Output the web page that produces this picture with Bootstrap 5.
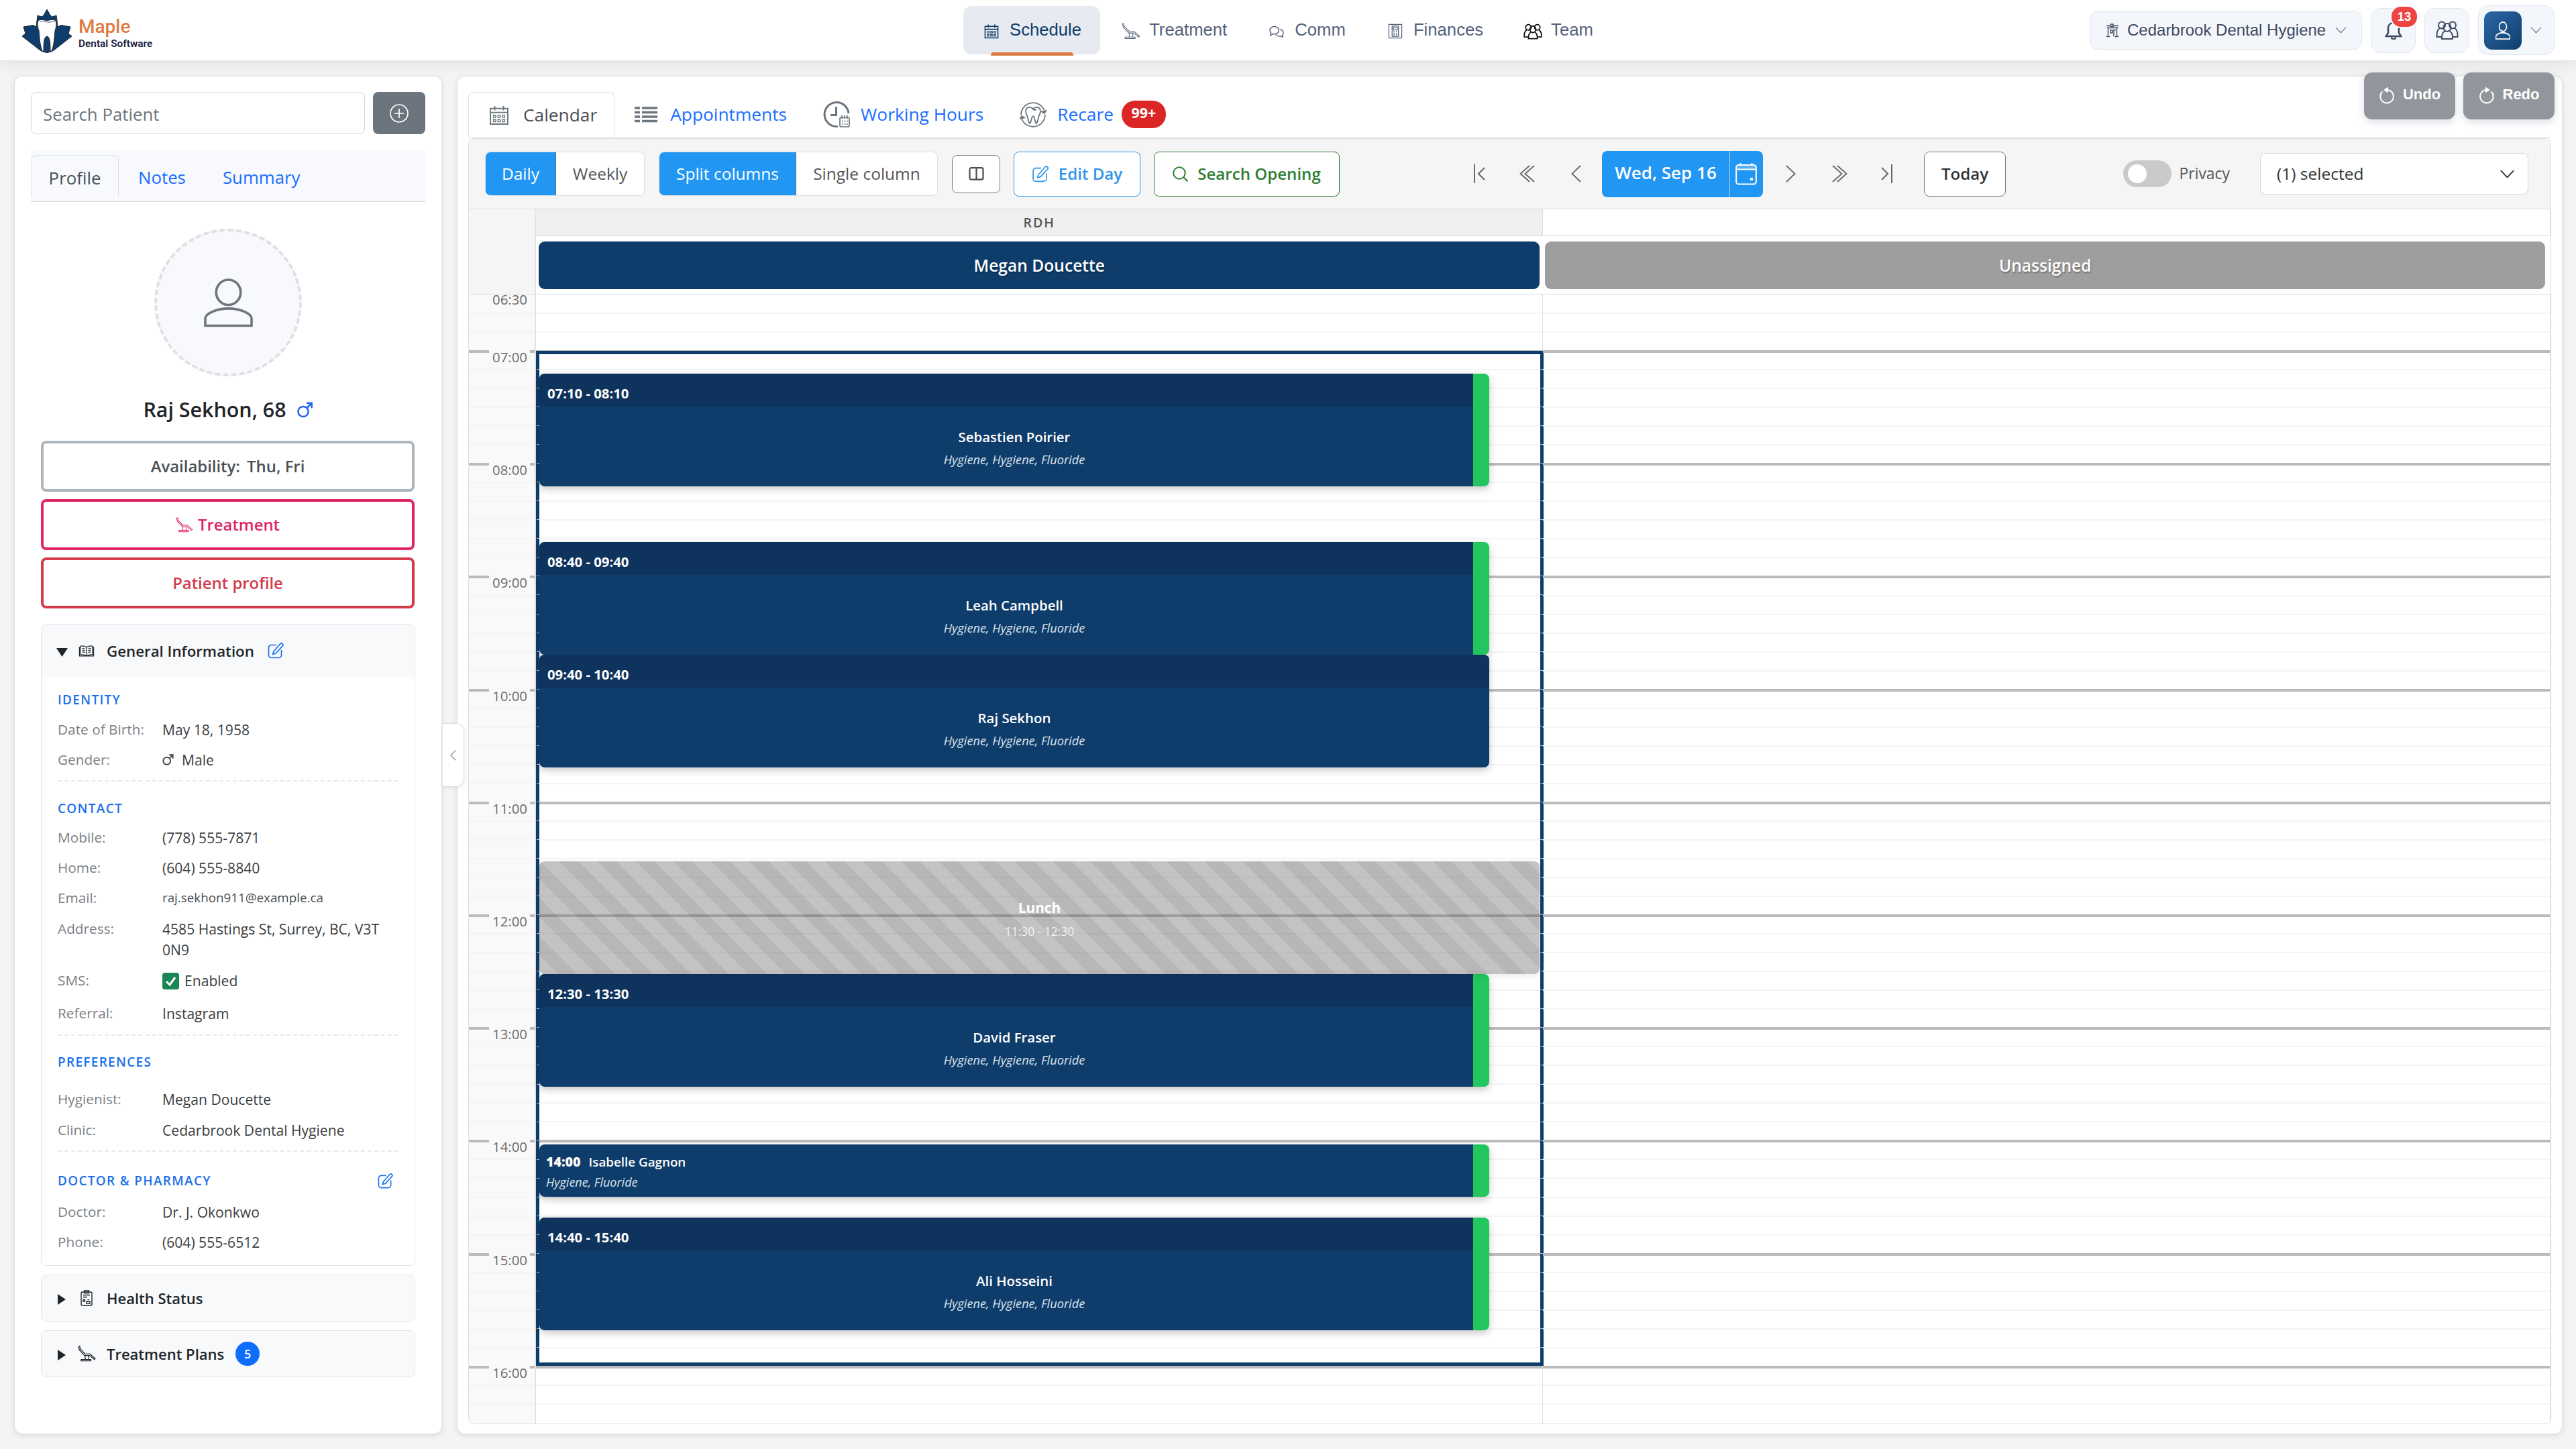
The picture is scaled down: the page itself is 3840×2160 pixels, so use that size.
<!DOCTYPE html>
<html lang="en">
<head>
    <meta charset="UTF-8">
    <meta name="viewport" content="width=device-width, initial-scale=1.0">
    <title>Maple Dental Software - Schedule</title>
    <link href="https://cdn.jsdelivr.net/npm/bootstrap@5.3.0/dist/css/bootstrap.min.css" rel="stylesheet">
    <style>
        body {
            font-family: "Open Sans", "Noto Sans", sans-serif;
            font-size: 25.8px;
            line-height: 1.3;
            color: #212529;
            background: #f4f4f4;
            height: 2160px;
            overflow: hidden;
        }
        svg { display: block; flex: none; fill: none; stroke: currentColor; }

        /* Top bar */
        .topbar {
            height: 91px;
            background: #fff;
            border-bottom: 1px solid #e5e7eb;
            box-shadow: 0 4px 20px rgba(15, 40, 80, .1);
            font-family: "Liberation Sans", Arial, sans-serif;
            padding: 0 32px 0 33px;
            position: relative;
        }
        .brand { width: 1403px; padding-top: 14px; }
        .brand-text { font-family: Roboto, sans-serif; margin-left: 10px; padding-top: 9px; }
        .brand-name { font-size: 28px; line-height: 33px; font-weight: 500; color: #dc7c42; }
        .brand-sub { font-size: 15.4px; line-height: 18px; font-weight: 600; color: #1a2140; white-space: nowrap; }
        .mainnav { padding-top: 9px; gap: 4px; font-size: 25.7px; }
        .mainnav a {
            display: flex;
            gap: 13px;
            height: 72px;
            padding: 0 28px 1px;
            align-items: center;
            color: #55617a;
            text-decoration: none;
            border-radius: 12px;
        }
        .mainnav a.current {
            background: #e7ebf1;
            color: #0f3d6b;
            position: relative;
        }
        .mainnav a.current::after {
            content: "";
            position: absolute;
            left: 41px;
            right: 40px;
            bottom: -2px;
            height: 5px;
            background: #dc7c42;
            border-radius: 4px 4px 0 0;
        }
        .top-pill {
            background: #f3f6fa;
            border: 1px solid #e1e6ed;
            border-radius: 15px;
            color: #3f4a60;
        }
        .clinic-pill { width: 406px; height: 58px; padding: 0 22px 0 23px; font-size: 24px; margin-right: 13px; border-radius: 12px; }
        .square-pill { width: 67px; height: 67px; margin-right: 13px; }
        .user-pill { width: 114px; height: 74px; padding: 0 18px 0 8px; color: #737b88; }
        .user-tile { width: 56px; height: 57px; border-radius: 12px; background: linear-gradient(135deg, #2c68a8, #0f3d6b); color: #fff; }
        .bell-count {
            position: absolute;
            left: 28px;
            top: -5px;
            width: 42px;
            height: 34px;
            line-height: 30px;
            border-radius: 16px;
            border: 2px solid #fff;
            background: #ef4444;
            color: #fff;
            font-size: 18.5px;
            font-weight: 700;
            text-align: center;
        }

        /* Page panels */
        .page-row { padding: 22px 20px 0 21px; }
        .panel {
            height: 2025px;
            background: #fff;
            border: 1px solid #dfe1e4;
            border-radius: 12px;
            box-shadow: 0 2px 8px rgba(0, 0, 0, .1);
        }
        .patient-panel { width: 638px; padding: 23px 24px 0; margin-right: 22px; flex: none; }
        .schedule-panel { width: 3139px; padding: 23px 16px 0; position: relative; }
        .search-box {
            width: 498px;
            height: 63px;
            border: 1px solid #d3d6da;
            border-radius: 8px;
            padding: 3px 17px 0;
            font-size: 25.8px;
        }
        .search-box::placeholder { color: #6c757d; opacity: 1; }
        .btn-add { width: 78px; height: 63px; border-radius: 8px; background: #6c757d; color: #fff; }
        .patient-tabs { height: 77px; margin-top: 24px; padding-top: 7px; background: #f8f9fc; border-bottom: 1px solid #d9dcdf; }
        .patient-tabs a { height: 63px; line-height: 66px; text-decoration: none; color: #1a6dff; margin-right: 55px; }
        .patient-tabs a.current {
            width: 131px;
            border: 1px solid #dee2e6;
            border-bottom-color: #fff;
            border-radius: 8px 8px 0 0;
            text-align: center;
            color: #495057;
            margin-right: 29px;
        }
        .patient-body { padding: 40px 15px 0; }
        .avatar { width: 220px; height: 220px; border: 4px dashed #dee0e3; border-radius: 50%; background: #f8f9fc; color: #6c757d; }
        .patient-name { height: 96px; padding-top: 4px; gap: 15px; font-size: 30.4px; font-weight: 600; }
        .btn-side {
            width: 557px;
            height: 76px;
            margin-bottom: 11px;
            border: 4px solid;
            border-radius: 8px;
            font-size: 23.9px;
            font-weight: 600;
            background: #fff;
            gap: 7px;
        }
        .side-gray { border-color: #adb5bd; color: #4b5056; }
        .side-pink { border-color: #df2464; color: #df2464; }
        .side-red { border-color: #d33a4a; color: #d33a4a; }

        .info-card { width: 558px; border: 1px solid #e1e4e8; border-radius: 8px; margin-bottom: 13px; overflow: hidden; }
        .info-head { height: 68px; padding-left: 22px; background: #f8f9fb; font-size: 22px; font-weight: 600; color: #212529; }
        .info-head .arrow-box { width: 28px; margin-top: 4px; }
        .info-head .icon-box { width: 34px; }
        .info-head .head-text { margin-left: 13px; }
        .info-open { margin-top: 23px; }
        .info-open .info-head { height: 78px; font-size: 22.3px; }
        .info-body { padding: 0 24px 12px; font-size: 21.1px; color: #3a3d41; }
        .info-sec { display: grid; border-bottom: 2px dashed #e8eaed; }
        .info-sec > div { display: flex; align-items: center; }
        .info-sec:last-child { border: 0; }
        .sec-identity { grid-template-rows: 44px 45px 45px; padding: 12px 0 8px; }
        .sec-contact { grid-template-rows: 43px 44px 45px 45px 78px 46px 52px; padding: 19px 0 5px; }
        .sec-prefs { grid-template-rows: 55px 46px 46px; padding: 17px 0 7px; }
        .sec-prefs .sec-title { padding-bottom: 10px; }
        .sec-doctor { grid-template-rows: 48px 45px 45px; padding: 19px 0 0; }
        .sec-title { font-size: 19px; font-weight: 600; letter-spacing: 1.3px; color: #1b70ea; }
        .info-key { width: 156px; flex: none; font-size: 20.8px; color: #7b8187; }
        .info-mail { font-size: 18.8px; color: #4b4f54; }
        .plan-count { width: 36px; height: 36px; border-radius: 50%; background: #0d6efd; color: #fff; font-size: 18px; line-height: 36px; text-align: center; margin-left: 17px; }
        .panel-handle {
            position: absolute;
            left: -22px;
            top: 964px;
            width: 32px;
            height: 95px;
            background: #fff;
            border: 1px solid #dcdfe2;
            border-left: 0;
            border-radius: 0 12px 12px 0;
            color: #999;
            box-shadow: 2px 2px 5px rgba(0, 0, 0, .06);
        }

        /* Undo and redo float over the panel edge */
        .history { position: absolute; right: 11px; top: -6px; gap: 12px; font-family: "Liberation Sans", Arial, sans-serif; }
        .history button {
            width: 136px;
            height: 70px;
            border: 0;
            border-radius: 12px;
            background: #90969c;
            color: #fff;
            font-size: 22px;
            font-weight: 700;
            gap: 12px;
            padding-bottom: 4px;
            box-shadow: 0 4px 12px rgba(60, 80, 110, .18);
        }

        .view-tabs { height: 69px; border-bottom: 1px solid #dcdcdc; }
        .view-tabs a { height: 67px; padding: 0 27px; gap: 16px; text-decoration: none; color: #1a6dff; font-size: 26.3px; }
        .view-tabs a.current { border: 1px solid #dee2e6; border-bottom: 0; border-radius: 8px 8px 0 0; color: #495057; padding: 0 25px 0 25px; }
        .view-tabs svg { color: #6c757d; }
        .recare-count { width: 66px; height: 41px; margin-left: -4px; padding-bottom: 5px; border-radius: 20px; background: #dc2626; color: #fff; font-size: 21.5px; font-weight: 700; line-height: 35px; text-align: center; }

        .cal-box { height: 1917px; border: 1px solid #dedede; border-radius: 8px; overflow: hidden; }
        .cal-tools { height: 105px; padding: 0 33px 0 24px; background: #f5f5f5; border-bottom: 1px solid #dcdcdc; font-size: 24.5px; color: #555; }
        .seg { height: 66px; border: 1px solid #dedede; border-radius: 8px; background: #fff; overflow: hidden; }
        .seg span { line-height: 64px; text-align: center; }
        .seg .on { background: #2196f3; color: #fff; border-right: 1px solid #5b7186; }
        .seg-day { margin-right: 21px; }
        .tool-btn { height: 67px; border: 1.5px solid; border-radius: 8px; background: #fff; font-size: 24.1px; font-weight: 600; gap: 14px; }
        .tool-cols { width: 72px; height: 57px; border-color: #757983; color: #4a4d52; margin: 0 20px 0 21px; }
        .tool-edit { width: 189px; color: #2f95ea; margin-right: 20px; }
        .tool-search { width: 277px; color: #2e7d32; }
        .steps { margin-left: 173px; }
        .step { height: 60px; color: #666; }
        .date-box { width: 240px; height: 69px; background: #2196f3; border-radius: 8px; color: #fff; font-size: 26px; font-weight: 600; }
        .date-box .date-text { width: 191px; line-height: 64px; height: 69px; text-align: center; border-right: 1px solid #9ccff9; }
        .date-box .date-pick { width: 48px; }
        .tool-today { width: 122px; margin-left: 17px; color: #333; border-color: #757983; }
        .toggle-track { width: 72px; height: 40px; border-radius: 20px; background: #cacaca; padding: 6px 7px; }
        .toggle-track i { display: block; width: 28px; height: 28px; border-radius: 50%; background: #fff; }
        .privacy-text { font-size: 22.9px; margin-left: 12px; font-weight: 500; }
        .tool-select { width: 400px; height: 62px; border: 1px solid #d5d5d5; border-radius: 8px; background: #fff; padding: 0 19px 0 24px; margin-left: 45px; color: #333; }

        .cal-head { height: 127px; border-bottom: 1px solid #dcdcdc; }
        .head-time { width: 100px; background: #f5f5f5; border-right: 2px solid #e4e4e4; }
        .head-col { width: 1502px; }
        .head-role { height: 40px; border-bottom: 1px solid #dedede; border-right: 1px solid #dedede; text-align: center; font-size: 19.5px; line-height: 39px; letter-spacing: 2px; font-weight: 600; color: #555; }
        .role-on { background: #efefef; }
        .provider { height: 71px; margin: 8px 5px 0 4px; border-radius: 9px; color: #fff; font-size: 24.6px; font-weight: 600; line-height: 71px; text-align: center; text-shadow: 1px 2px 2px rgba(0, 0, 0, .3); }
        .provider-navy { background: #0f3d6b; }
        .provider-gray { background: #9e9e9e; margin-left: 3px; margin-right: 8px; }

        /* Ten minute slots, six to an hour */
        .cal-body { height: 1684px; overflow: hidden; }
        .slot-col { display: grid; grid-template-rows: repeat(60, 28.04px); width: 1502px; margin-top: -1px; position: relative; border-right: 1px solid #e0e0e0; }
        .slot-col .slot { border-top: 2px solid #f4f4f4; }
        .slot-col .slot:first-child { border-top-color: transparent; }
        .slot-col .slot.hour { border-top: 4px solid #bbb; }
        .time-col { width: 100px; background: #f9f9f9; border-right: 2px solid #e2e2e2; }
        .time-label { display: block; position: relative; top: -8px; left: 30px; width: 61px; padding-right: 4px; background: #f9f9f9; font-size: 20.4px; line-height: 28px; text-align: right; color: #6c6c6c; }
        .hours-open { position: absolute; left: 0; top: 85px; width: 1502px; height: 1513px; border: 5px solid #0f3d6b; }
        .hours-open::before, .hours-open::after {
            content: "";
            position: absolute;
            top: 22px;
            bottom: 0;
            width: 4px;
            background: repeating-linear-gradient(rgba(255, 255, 255, .65) 0 1px, transparent 1px 28.04px);
        }
        .hours-open::before { left: -4px; }
        .hours-open::after { right: -4px; }
        .visit {
            position: absolute;
            left: 5px;
            width: 1416px;
            height: 168px;
            border-radius: 8px;
            background: #0f3d6b;
            border-right: 24px solid #22c55e;
            color: #fff;
            text-align: center;
            overflow: hidden;
        }
        .visit-shadow { position: absolute; left: 5px; width: 1416px; height: 168px; border-radius: 8px; box-shadow: 0 4px 12px rgba(0, 0, 0, .22); }
        .visit.plain { border-right: 0; }
        .visit-time { height: 49px; background: #0e345d; padding-left: 12px; font-size: 20.3px; font-weight: 700; line-height: 58px; text-align: left; }
        .visit-name { font-size: 20.4px; font-weight: 600; line-height: 30px; margin-top: 30px; }
        .visit-what { font-size: 18.2px; font-style: italic; line-height: 28px; margin-top: 5px; color: #dbe4ee; }
        .with-bar .visit-name, .with-bar .visit-what { margin-right: -24px; }
        .short-visit { height: 78px; text-align: left; padding: 11px 0 0 10px; }
        .short-visit .visit-name { margin: 0; font-size: 18.8px; }
        .short-visit .visit-name b { font-size: 19.6px; margin-right: 12px; }
        .short-visit .visit-what { margin: 1px 0 0; font-size: 18px; }
        .lunch {
            position: absolute;
            left: 5px;
            top: 846px;
            width: 1491px;
            height: 168px;
            border-radius: 8px;
            background: repeating-linear-gradient(45deg, rgba(125, 125, 125, .46) 0 20px, rgba(98, 98, 98, .46) 20px 40px);
            color: #fff;
            text-align: center;
            box-shadow: 0 3px 8px rgba(0, 0, 0, .08);
        }
        .lunch-name { margin-top: 54px; font-size: 20.8px; font-weight: 700; line-height: 30px; }
        .lunch-time { margin-top: 6px; font-size: 17.4px; line-height: 28px; color: #f3f3f3; }
    </style>
</head>
<body>
    <!-- icon shapes -->
    <svg width="0" height="0" class="position-absolute">
        <symbol id="i-calendar" viewBox="0 0 24 24"><path d="M2 4.500h20v18H2zM2 9h20M7 1.500v5M17 1.500v5"/><path stroke-width="1.100" d="M5.500 12.200h2.600v2.600H5.500zM10.700 12.200h2.600v2.600h-2.600zM15.900 12.200h2.600v2.600h-2.600zM5.500 17.200h2.600v2.600H5.500zM10.700 17.200h2.600v2.600h-2.600zM15.900 17.200h2.600v2.600h-2.600z"/></symbol>
        <symbol id="i-chair" viewBox="0 0 32 28"><path d="M1.500 1.500l2-.5 1 4.500 8.500 9h8.500l9 8-1.500 1.500-8.500-7H12L3 7.500zM13 17.500v6.500M19 17.500v6.500M6 24h17v2.500H6z"/></symbol>
        <symbol id="i-chat" viewBox="0 0 28 24"><path d="M10 3c4.500 0 8 3 8 6.800s-3.500 6.800-8 6.800c-1 0-2-.1-2.900-.4L3 19l1-4.200C2.700 13.500 2 11.800 2 9.800 2 6 5.500 3 10 3zM20 8c3.500.8 6 3.300 6 6.300 0 1.600-.6 3-1.600 4.100l.8 3.600-3.700-1.800c-3.500.8-7.500-.5-8.800-3.800"/></symbol>
        <symbol id="i-calc" viewBox="0 0 22 24"><path d="M1 1.500h20v21H1zM6 4h10v16H6zM8 6h6v4H8zM8 12.500h2M12 12.500h2M8 15h2M12 15h2M8 17.500h2M12 17.500h2"/></symbol>
        <symbol id="i-team" viewBox="0 0 34 28"><circle cx="9" cy="6.500" r="5"/><circle cx="25" cy="6.500" r="5"/><path d="M6 11c-3 2-4.500 5-4.500 9.500V24H9M28 11c3 2 4.500 5 4.500 9.500V24H25"/><ellipse cx="17" cy="10" rx="5.500" ry="6"/><path d="M13 15.500c-3 2-4 5-4 9V27h16v-2.500c0-4-1-7-4-9"/></symbol>
        <symbol id="i-clinic" viewBox="0 0 20 22"><path d="M1 4.500h18M3.500 7.500v12M16.500 7.500v12M1 20.500h5M14 20.500h5M2 7.500h16M7 11h3v4H7zM12 20.500V11h2.500"/><path d="M7.500 2h3.500v3.500H7.500z" fill="#f3f6fa"/></symbol>
        <symbol id="i-bell" viewBox="0 0 26 28"><path d="M2 23h22l-3-5V11c0-5-3.500-8-8-8s-8 3-8 8v7z"/><path d="M10 24.500a3 3 0 0 0 6 0"/></symbol>
        <symbol id="i-user" viewBox="0 0 74 74"><ellipse cx="37" cy="21.500" rx="18.500" ry="19"/><path d="M2 72V61c0-7 17-15 35-15s35 8 35 15v11z"/></symbol>
        <symbol id="i-down" viewBox="0 0 20 12"><path d="M1 1l9 9.500L19 1"/></symbol>
        <symbol id="i-pencil" viewBox="0 0 24 24"><path d="M13 3.500H5.500a4 4 0 0 0-4 4v11a4 4 0 0 0 4 4h11a4 4 0 0 0 4-4V11"/><path d="M18.800 1.800a2.300 2.300 0 0 1 3.300 3.300L12 16l-4.300 1.200L8.900 13z"/></symbol>
        <symbol id="i-undo" viewBox="0 0 24 26"><path d="M5.500 7.500A9.800 9.800 0 1 0 13 5"/><path d="M14 .5v9L7 5z" fill="currentColor" stroke="none"/></symbol>
        <symbol id="i-male" viewBox="0 0 24 24"><circle cx="9.500" cy="14.500" r="7.600"/><path d="M15 9l7-7M14.500 1.800h7.700v7.700"/></symbol>
    </svg>

    <header class="topbar d-flex align-items-start">
        <div class="brand d-flex">
            <svg width="74" height="65" viewBox="0 0 74 65" stroke="none">
                <path fill="#0f3d6b" d="M37 0l5 9 3 2 6-2 1 8 1 9 5-2.500L72 26l-3 10 5 4L51 58q-6 6-14 6.500Q29 64 23 58L0 40l5-4L2 26l14-2.500 5 2.500 1-9 1-8 6 2 3-2z"/>
                <path fill="#fff" d="M24 17c4-3 8-1 13-.5 5-.5 9-2.500 13 .5 2 5 .5 10-1 15-1 9-1 20-5 30l-2 1c0-10 0-22-5-23-5 1-5 13-5 23l-2-1c-4-10-4-21-5-30-1.500-5-3-10-1-15z"/>
                <path stroke="#0f3d6b" stroke-width=".9" fill="none" d="M27 18q4-1.500 7 0t8 1q4-2 7-1"/>
            </svg>
            <div class="brand-text">
                <div class="brand-name">Maple</div>
                <div class="brand-sub">Dental Software</div>
            </div>
        </div>
        <nav class="mainnav d-flex">
            <a class="current" href="#"><svg width="28" height="23" stroke-width="1.600" class="mt-1"><use href="#i-calendar"/></svg>Schedule</a>
            <a href="#"><svg width="28" height="25" stroke-width="1.200" class="mt-1"><use href="#i-chair"/></svg>Treatment</a>
            <a href="#"><svg width="28" height="20" stroke-width="1.700" class="mt-1"><use href="#i-chat"/></svg>Comm</a>
            <a href="#"><svg width="28" height="23" stroke-width="1.300" class="mt-1"><use href="#i-calc"/></svg>Finances</a>
            <a href="#"><svg width="28" height="26" stroke-width="2.100" class="mt-1" color="#111"><use href="#i-team"/></svg>Team</a>
        </nav>
        <div class="d-flex align-items-center ms-auto h-100">
            <div class="top-pill clinic-pill d-flex align-items-center">
                <svg width="20" height="22" stroke-width="1.400" class="me-2"><use href="#i-clinic"/></svg>
                <span class="ms-1 text-nowrap">Cedarbrook Dental Hygiene</span>
                <svg width="17" height="10" stroke-width="1.500" class="ms-auto" color="#737b88"><use href="#i-down"/></svg>
            </div>
            <div class="top-pill square-pill d-flex align-items-center justify-content-center position-relative">
                <svg width="26" height="28" stroke-width="2.600"><use href="#i-bell"/></svg>
                <span class="bell-count">13</span>
            </div>
            <div class="top-pill square-pill d-flex align-items-center justify-content-center">
                <svg width="34" height="28" stroke-width="2"><use href="#i-team"/></svg>
            </div>
            <div class="top-pill user-pill d-flex align-items-center justify-content-between">
                <div class="user-tile d-flex align-items-center justify-content-center">
                    <svg width="22" height="27" stroke-width="5" viewBox="0 0 74 74" preserveAspectRatio="none"><ellipse cx="37" cy="21.500" rx="18.500" ry="19"/><path d="M2 72V61c0-7 17-15 35-15s35 8 35 15v11z"/></svg>
                </div>
                <svg width="17" height="10" stroke-width="1.500"><use href="#i-down"/></svg>
            </div>
        </div>
    </header>

    <div class="page-row d-flex">
        <aside class="panel patient-panel">
            <div class="d-flex justify-content-between">
                <input class="search-box" placeholder="Search Patient">
                <button class="btn btn-add d-flex align-items-center justify-content-center p-0">
                    <svg width="28" height="28" viewBox="0 0 28 28" stroke-width="1.700"><circle cx="14" cy="14" r="13"/><path d="M14 7v14M7 14h14"/></svg>
                </button>
            </div>
            <div class="patient-tabs d-flex">
                <a class="current" href="#">Profile</a>
                <a href="#">Notes</a>
                <a href="#">Summary</a>
            </div>
            <div class="patient-body">
                <div class="avatar d-flex align-items-center justify-content-center mx-auto">
                    <svg width="73" height="74" stroke-width="3.600"><use href="#i-user"/></svg>
                </div>
                <div class="patient-name d-flex align-items-center justify-content-center">Raj Sekhon, 68
                    <svg width="25" height="24" stroke-width="2.500" color="#2563eb"><use href="#i-male"/></svg>
                </div>
                <div class="btn-side side-gray d-flex align-items-center justify-content-center">Availability: &thinsp;Thu, Fri</div>
                <div class="btn-side side-pink d-flex align-items-center justify-content-center"><svg width="26" height="23" stroke-width="1.300"><use href="#i-chair"/></svg>Treatment</div>
                <div class="btn-side side-red d-flex align-items-center justify-content-center">Patient profile</div>

                <div class="info-card info-open" id="generalInfo">
                    <div class="info-head d-flex align-items-center">
                        <div class="arrow-box"><svg width="17" height="13" viewBox="0 0 17 13"><path d="M0 0h17L8.500 13z" fill="#212529" stroke="none"/></svg></div>
                        <div class="icon-box"><svg width="24" height="19" viewBox="0 0 26 19" stroke-width="1.300" class="mx-auto"><path d="M13 3Q8 .5 3.500 1.500v14Q8 14.500 13 17q5-2.500 9.500-1.500v-14Q18 .5 13 3v14M3.500 3.500h-2V17.500h23V3.500h-2M6 5l4.500.7M6 8l4.500.7M6 11l4.500.7M20 5l-4.500.7M20 8l-4.500.7M20 11l-4.500.7"/></svg></div>
                        <span class="head-text me-1">General Information</span>
                        <svg width="24" height="24" stroke-width="1.700" class="ms-3" color="#1b70ea"><use href="#i-pencil"/></svg>
                    </div>
                    <div class="info-body">
                        <div class="info-sec sec-identity">
                            <div class="sec-title">IDENTITY</div>
                            <div><span class="info-key">Date of Birth:</span>May 18, 1958</div>
                            <div><span class="info-key">Gender:</span><svg width="17" height="17" stroke-width="2.600" class="me-2"><use href="#i-male"/></svg><span class="ms-1">Male</span></div>
                        </div>
                        <div class="info-sec sec-contact">
                            <div class="sec-title">CONTACT</div>
                            <div><span class="info-key">Mobile:</span>(778) 555-7871</div>
                            <div><span class="info-key">Home:</span>(604) 555-8840</div>
                            <div><span class="info-key">Email:</span><span class="info-mail">raj.sekhon911@example.ca</span></div>
                            <div class="align-items-start pt-2" style="line-height: 31px"><span class="info-key">Address:</span><span>4585 Hastings St, Surrey, BC, V3T 0N9</span></div>
                            <div><span class="info-key">SMS:</span><svg width="25" height="25" viewBox="0 0 25 25"><rect width="25" height="25" rx="4" fill="#198754" stroke="none"/><path d="M6 13l5 5L19 7" stroke="#fff" stroke-width="3"/></svg><span class="ms-2">Enabled</span></div>
                            <div><span class="info-key">Referral:</span>Instagram</div>
                        </div>
                        <div class="info-sec sec-prefs">
                            <div class="sec-title">PREFERENCES</div>
                            <div><span class="info-key">Hygienist:</span>Megan Doucette</div>
                            <div><span class="info-key">Clinic:</span>Cedarbrook Dental Hygiene</div>
                        </div>
                        <div class="info-sec sec-doctor">
                            <div class="sec-title justify-content-between pe-2">DOCTOR &amp; PHARMACY<svg width="23" height="23" stroke-width="1.700"><use href="#i-pencil"/></svg></div>
                            <div><span class="info-key">Doctor:</span>Dr. J. Okonkwo</div>
                            <div><span class="info-key">Phone:</span>(604) 555-6512</div>
                        </div>
                    </div>
                </div>

                <div class="info-card">
                    <div class="info-head d-flex align-items-center">
                        <div class="arrow-box"><svg width="14" height="16" viewBox="0 0 14 16"><path d="M2 0v16l12-8z" fill="#212529" stroke="none"/></svg></div>
                        <div class="icon-box"><svg width="18" height="24" viewBox="0 0 18 24" stroke-width="1.400" class="mx-auto"><rect x="1" y="3" width="16" height="20" rx="2"/><path d="M5.500 1h7v3.500h-7zM4 7.500h10M4 10.500h6M4 14.500h2.500v2.500H4zM9 20v-3h5v3zM10.500 14.500h2"/></svg></div>
                        <span class="head-text">Health Status</span>
                    </div>
                </div>
                <div class="info-card">
                    <div class="info-head d-flex align-items-center">
                        <div class="arrow-box"><svg width="14" height="16" viewBox="0 0 14 16"><path d="M2 0v16l12-8z" fill="#212529" stroke="none"/></svg></div>
                        <div class="icon-box"><svg width="29" height="24" stroke-width="1.500" class="mx-auto"><use href="#i-chair"/></svg></div>
                        <span class="head-text">Treatment Plans</span>
                        <span class="plan-count">5</span>
                    </div>
                </div>
            </div>
        </aside>

        <main class="panel schedule-panel">
            <div class="panel-handle d-flex align-items-center justify-content-center"><svg width="9" height="16" viewBox="0 0 12 26" stroke-width="2" preserveAspectRatio="none"><path d="M11 1L1.500 13 11 25"/></svg></div>
            <div class="history d-flex">
                <button class="d-flex align-items-center justify-content-center"><svg width="24" height="26" stroke-width="2"><use href="#i-undo"/></svg>Undo</button>
                <button class="d-flex align-items-center justify-content-center"><svg width="24" height="26" stroke-width="2"><use href="#i-undo" transform="matrix(-1 0 0 1 24 0)"/></svg>Redo</button>
            </div>

            <div class="view-tabs d-flex">
                <a class="current d-flex align-items-center" href="#"><svg width="40" height="31" stroke-width="1.500"><use href="#i-calendar"/></svg>Calendar</a>
                <a class="d-flex align-items-center" href="#"><svg width="40" height="26" viewBox="0 0 40 26" stroke-width="3.600"><path d="M3 3h8M14 3h23M3 9.500h8M14 9.500h23M3 16h8M14 16h23M3 22.500h8M14 22.500h23"/></svg>Appointments</a>
                <a class="d-flex align-items-center" href="#"><svg width="40" height="40" viewBox="0 0 40 40" stroke-width="3"><path d="M38 18A18 18 0 1 0 22 37.500M19.500 8v12.500H11"/><rect x="25" y="24" width="14" height="14" rx="2" stroke-width="1.700"/><path stroke-width="1.700" d="M28 21v5M32 21v5M36 21v5M28 29.500h2M31.500 29.500h2M35 29.500h2M28 34h2M31.500 34h2M35 34h2"/></svg>Working Hours</a>
                <a class="d-flex align-items-center" href="#"><svg width="40" height="40" viewBox="0 0 40 40" stroke-width="1.800"><path d="M2 20A18 18 0 0 1 36.500 13M38 20A18 18 0 0 1 3.500 27"/><path d="M39 14l-2 4-4-2.500zM1 26l2-4 4 2.500z" fill="currentColor"/><path d="M20 11c-3-2-6-3-9-1-3 3-2 8 0 11 2 4 1 9 4 12 3-2 2-10 5-11 3 1 2 9 5 11 3-3 2-8 4-12 2-3 3-8 0-11-3-2-6-1-9 1zM19 11q3 3 6 1.500"/></svg>Recare<span class="recare-count">99+</span></a>
            </div>

            <div class="cal-box">
                <div class="cal-tools d-flex align-items-center">
                    <div class="seg seg-day d-flex"><span class="on" style="width: 105px">Daily</span><span style="width: 131px">Weekly</span></div>
                    <div class="seg d-flex"><span class="on" style="width: 204px">Split columns</span><span style="width: 210px">Single column</span></div>
                    <div class="tool-btn tool-cols d-flex align-items-center justify-content-center"><svg width="23" height="20" viewBox="0 0 23 20" stroke-width="2.200"><rect x="1.500" y="1.200" width="20" height="17.500" rx="2.500"/><path d="M11.500 1v18"/></svg></div>
                    <div class="tool-btn tool-edit d-flex align-items-center justify-content-center"><svg width="26" height="25" stroke-width="1.600"><use href="#i-pencil"/></svg>Edit Day</div>
                    <div class="tool-btn tool-search d-flex align-items-center justify-content-center"><svg width="23" height="23" viewBox="0 0 23 23" stroke-width="2"><circle cx="10" cy="10" r="8.700"/><path d="M16.500 16.500l6 6"/></svg>Search Opening</div>

                    <div class="steps d-flex align-items-center">
                        <div class="step d-flex align-items-center justify-content-center" style="width: 70px"><svg width="18" height="28" viewBox="0 0 18 28" stroke-width="2"><path d="M2 0v28M17 5L8 14l9 9"/></svg></div>
                        <div class="step d-flex align-items-center justify-content-center" style="width: 71px"><svg width="24" height="26" viewBox="0 0 24 26" stroke-width="1.800"><path d="M16 1L2.500 13 16 25M23 1L9.500 13 23 25"/></svg></div>
                        <div class="step d-flex align-items-center justify-content-center" style="width: 77px"><svg width="15" height="26" viewBox="0 0 15 26" stroke-width="1.800"><path d="M14 1L1.500 13 14 25"/></svg></div>
                        <div class="date-box d-flex">
                            <span class="date-text">Wed, Sep 16</span>
                            <span class="date-pick d-flex align-items-center justify-content-center"><svg width="32" height="33" viewBox="0 0 32 33" stroke-width="2"><path d="M1 4h30v5H1z" fill="#fff" fill-opacity=".25" stroke="none"/><rect x="1.200" y="3" width="29.600" height="28.500" rx="3.500"/><path d="M1 9.500h30M7.500 0v4M24.500 0v4"/><path d="M22 22h4v4h-4z" fill="currentColor" stroke="none"/></svg></span>
                        </div>
                        <div class="step d-flex align-items-center justify-content-center" style="width: 82px"><svg width="15" height="26" viewBox="0 0 15 26" stroke-width="1.800"><path d="M1 1l12.500 12L1 25"/></svg></div>
                        <div class="step d-flex align-items-center justify-content-center" style="width: 65px"><svg width="24" height="26" viewBox="0 0 24 26" stroke-width="1.800"><path d="M1 1l13.500 12L1 25M8 1l13.500 12L8 25"/></svg></div>
                        <div class="step d-flex align-items-center justify-content-center" style="width: 76px"><svg width="18" height="28" viewBox="0 0 18 28" stroke-width="2"><path d="M16 0v28M1 5l9 9-9 9"/></svg></div>
                        <div class="tool-btn tool-today d-flex align-items-center justify-content-center">Today</div>
                    </div>

                    <div class="toggle-track ms-auto"><i></i></div>
                    <span class="privacy-text">Privacy</span>
                    <div class="tool-select d-flex align-items-center justify-content-between">(1) selected<svg width="23" height="13" stroke-width="1.700"><use href="#i-down"/></svg></div>
                </div>

                <div class="cal-head d-flex">
                    <div class="head-time"></div>
                    <div class="head-col">
                        <div class="head-role role-on">RDH</div>
                        <div class="provider provider-navy">Megan Doucette</div>
                    </div>
                    <div class="head-col">
                        <div class="head-role"></div>
                        <div class="provider provider-gray">Unassigned</div>
                    </div>
                </div>

                <div class="cal-body d-flex">
                    <div class="slot-col time-col" id="timeCol"></div>
                    <div class="slot-col" id="providerCol"></div>
                    <div class="slot-col" id="unassignedCol"></div>
                </div>
            </div>
        </main>
    </div>

    <script src="https://cdn.jsdelivr.net/npm/bootstrap@5.3.0/dist/js/bootstrap.bundle.min.js"></script>
    <script>
        const SLOTS = 60;
        const FIRST_HOUR_SLOT = 3;

        const visits = [
            { time: '07:10 - 08:10', name: 'Sebastien Poirier', what: 'Hygiene, Hygiene, Fluoride', top: 119, bar: true },
            { time: '08:40 - 09:40', name: 'Leah Campbell', what: 'Hygiene, Hygiene, Fluoride', top: 370, bar: true },
            { time: '09:40 - 10:40', name: 'Raj Sekhon', what: 'Hygiene, Hygiene, Fluoride', top: 538, bar: false },
            { time: '12:30 - 13:30', name: 'David Fraser', what: 'Hygiene, Hygiene, Fluoride', top: 1014, bar: true },
            { time: '14:00', name: 'Isabelle Gagnon', what: 'Hygiene, Fluoride', top: 1268, bar: true, short: true },
            { time: '14:40 - 15:40', name: 'Ali Hosseini', what: 'Hygiene, Hygiene, Fluoride', top: 1377, bar: true }
        ];

        // Build the empty slots of one column
        function fillSlots(col, withLabels) {
            for (let i = 0; i < SLOTS; i++) {
                const slot = document.createElement('div');
                const isHour = (i - FIRST_HOUR_SLOT) % 6 === 0;
                slot.className = isHour ? 'slot hour' : 'slot';
                if (withLabels && (isHour || i === 0)) {
                    const hour = 7 + (i - FIRST_HOUR_SLOT) / 6;
                    const text = i === 0 ? '06:30' : String(hour).padStart(2, '0') + ':00';
                    slot.innerHTML = `<span class="time-label">${text}</span>`;
                }
                col.appendChild(slot);
            }
        }

        fillSlots(document.getElementById('timeCol'), true);
        fillSlots(document.getElementById('providerCol'), false);
        fillSlots(document.getElementById('unassignedCol'), false);

        const col = document.getElementById('providerCol');
        let html = '<div class="hours-open"></div>';
        visits.forEach(v => {
            const height = v.short ? 78 : 168;
            html += `<div class="visit-shadow" style="top: ${v.top}px; height: ${height}px"></div>`;
        });
        visits.forEach(v => {
            const cls = v.bar ? 'with-bar' : 'plain';
            if (v.short) {
                html += `<div class="visit short-visit ${cls}" style="top: ${v.top}px">
                    <div class="visit-name"><b>${v.time}</b>${v.name}</div>
                    <div class="visit-what">${v.what}</div></div>`;
            } else {
                html += `<div class="visit ${cls}" style="top: ${v.top}px">
                    <div class="visit-time">${v.time}</div>
                    <div class="visit-name">${v.name}</div>
                    <div class="visit-what">${v.what}</div></div>`;
            }
        });
        html += `<div class="lunch"><div class="lunch-name">Lunch</div><div class="lunch-time">11:30 - 12:30</div></div>`;
        col.insertAdjacentHTML('beforeend', html);
    </script>
</body>
</html>
